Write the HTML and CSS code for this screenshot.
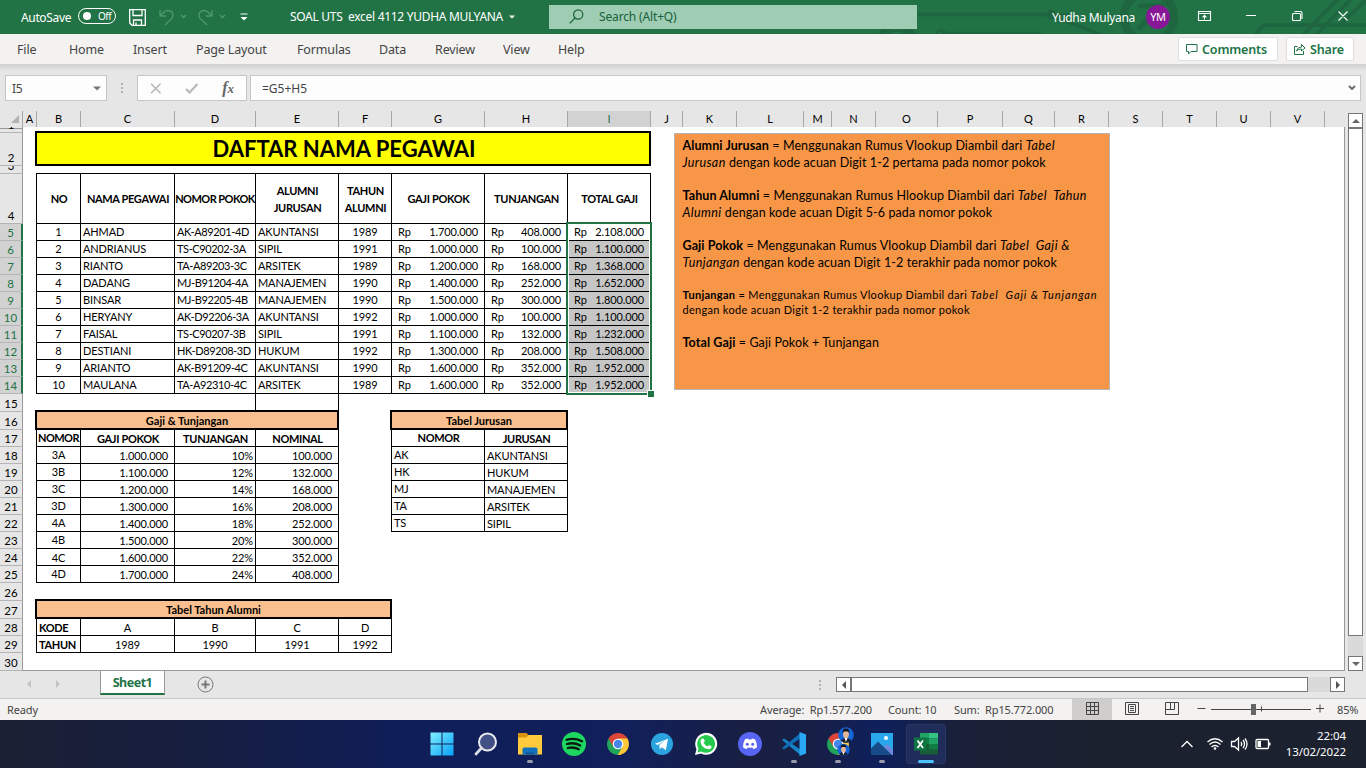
FILE: index.html
```html
<!DOCTYPE html>
<html lang="id">
<head>
<meta charset="utf-8">
<title>SOAL UTS excel 4112 YUDHA MULYANA</title>
<link rel="stylesheet" href="styles.css">
</head>
<body>
<header class="titlebar">
  <svg class="circuit" width="500" height="34" viewBox="866 0 500 34" fill="none" stroke="#1e6540" stroke-width="3.5">
    <circle cx="896" cy="40" r="15" stroke-width="6"/><path d="M888 34l3-3h11l3 3" stroke-width="2"/>
    <path d="M917 14.500H1050M1055 17l52 20M1050 15l22 0M910 30l6 6M941 33.500h100"/><circle cx="1051" cy="14.500" r="3"/><circle cx="941" cy="34" r="4" stroke-width="2.500"/>
    <circle cx="1149" cy="17" r="25" stroke-width="8"/><path d="M1138 6h24v18M1160 7l-22 22" stroke-width="5"/>
    <path d="M1254 36l10-11h102M1302 36l37-38M1315 36l37-38M1340 25l26-25"/>
  </svg>
  <span class="autosave">AutoSave</span>
  <span class="toggle"><i class="knob"></i>Off</span>
  <svg class="save" width="17" height="17" viewBox="0 0 17 17" fill="none" stroke="#fff" stroke-width="1.300"><path d="M.7.7h15.600v15.600H3L.7 14zM4 1v5.500h9V1M4.500 16v-5h8v5M7 16v-2.500"/></svg>
  <svg class="undo" width="80" height="18" viewBox="0 0 80 18" fill="none" stroke="#4f9870" stroke-width="1.300"><path d="M1 1v6h6M1 7l4-4c4-3 9-1 9 3 0 2-1 4-3 5l-5 5M22 6l2.500 2.500L27 6M53 1v6h-6M53 7l-4-4c-4-3-9-1-9 3 0 2 1 4 3 5l5 5M61 6l2.500 2.500L66 6"/></svg>
  <svg class="qat" width="8" height="8" viewBox="0 0 8 8"><path d="M.5 1h7" stroke="#fff"/><path d="M.5 4h7L4 7.500z" fill="#fff"/></svg>
  <span class="docname">SOAL UTS&nbsp; excel 4112 YUDHA MULYANA</span>
  <svg class="doccaret" width="6" height="4"><path d="M0 .5h6L3 3.500z" fill="#fff"/></svg>
  <div class="search"><svg width="15" height="15" viewBox="0 0 15 15" fill="none" stroke="#19603a" stroke-width="1.200"><circle cx="9.200" cy="5.500" r="4.600"/><path d="M6 9L.7 14.300"/></svg><span>Search (Alt+Q)</span></div>
  <span class="user">Yudha Mulyana</span>
  <span class="avatar">YM</span>
  <svg class="winbtns" width="156" height="14" viewBox="1197 9 156 14" fill="none" stroke="#fff" stroke-width="1.100"><path d="M1198.500 11.500h12v9h-12zM1198.500 13.500h12M1204.500 19.500v-4M1202.500 17.300l2-2 2 2M1246 15.500h10M1292.500 14.500q0-1 1-1h6q1 0 1 1v5q0 1-1 1h-6q-1 0-1-1zM1294.500 11.500h6q1.500 0 1.500 1.500v6M1338.500 11.500l9 9M1347.500 11.500l-9 9"/></svg>
</header>
<nav class="ribbon">
  <span class="t-file">File</span><span class="t-home">Home</span><span class="t-insert">Insert</span><span class="t-layout">Page Layout</span><span class="t-formulas">Formulas</span><span class="t-data">Data</span><span class="t-review">Review</span><span class="t-view">View</span><span>Help</span>
  <div class="actions">
    <button class="comments"><svg width="12" height="11" viewBox="0 0 12 11" fill="none" stroke="#217346"><path d="M.5.5h10.500v7H5L2.500 10V7.500h-2z"/></svg>Comments</button>
    <button class="share"><svg width="12" height="12" viewBox="0 0 12 12" fill="none" stroke="#217346"><path d="M3.500 3.500h-3v8h9V8M2.500 8q1-4 5-4V1.500L11 5 7.500 8V6q-3 0-5 2z"/></svg>Share</button>
  </div>
</nav>
<section class="formulabar">
  <div class="namebox"><span>I5</span><svg width="8" height="5"><path d="M0 .5h8L4 4.500z" fill="#777"/></svg></div>
  <div class="grip"><i></i><i></i><i></i></div>
  <div class="fxbox">
    <svg width="12" height="11" viewBox="0 0 12 11" fill="none" stroke="#b8b8b8" stroke-width="1.600"><path d="M1 .7l9.500 9.600M10.500.7L1 10.300"/></svg>
    <svg width="14" height="11" viewBox="0 0 14 11" fill="none" stroke="#b8b8b8" stroke-width="2.200"><path d="M1 6l3.500 3.500L12.500 1"/></svg>
    <span class="fx">f<small>x</small></span>
  </div>
  <div class="formula"><span>=G5+H5</span><svg width="8" height="6" fill="none" stroke="#666" stroke-width="1.800"><path d="M1 1l3 3 3-3"/></svg></div>
</section>
<main class="workspace">
<div class="sheet">
  <div class="colheads">
    <span class="corner"><svg width="8" height="8"><path d="M8 0v8H0z" fill="#b3b3b3"/></svg></span><span>A</span><span>B</span><span>C</span><span>D</span><span>E</span><span>F</span><span>G</span><span>H</span><span class="sel">I</span><span>J</span><span>K</span><span>L</span><span>M</span><span>N</span><span>O</span><span>P</span><span>Q</span><span>R</span><span>S</span><span>T</span><span>U</span><span>V</span><span class="last"></span>
  </div>
  <div class="rowheads">
    <span>1</span><span>2</span><span>3</span><span>4</span><span class="sel">5</span><span class="sel">6</span><span class="sel">7</span><span class="sel">8</span><span class="sel">9</span><span class="sel">10</span><span class="sel">11</span><span class="sel">12</span><span class="sel">13</span><span class="sel">14</span><span>15</span><span>16</span><span>17</span><span>18</span><span>19</span><span>20</span><span>21</span><span>22</span><span>23</span><span>24</span><span>25</span><span>26</span><span>27</span><span>28</span><span>29</span><span>30</span>
  </div>
  <div class="paper"></div>
  <h1 class="banner">DAFTAR NAMA PEGAWAI</h1>
  <div class="table pegawai">
    <b>NO</b><b>NAMA PEGAWAI</b><b class="tight">NOMOR POKOK</b><b>ALUMNI<br>JURUSAN</b><b>TAHUN<br>ALUMNI</b><b>GAJI POKOK</b><b>TUNJANGAN</b><b>TOTAL GAJI</b>
    <span class="c">1</span><span>AHMAD</span><span class="id">AK-A89201-4D</span><span>AKUNTANSI</span><span class="c">1989</span><span class="rp"><i>Rp</i>1.700.000</span><span class="rp"><i>Rp</i>408.000</span><span class="rp"><i>Rp</i>2.108.000</span>
    <span class="c">2</span><span>ANDRIANUS</span><span class="id">TS-C90202-3A</span><span>SIPIL</span><span class="c">1991</span><span class="rp"><i>Rp</i>1.000.000</span><span class="rp"><i>Rp</i>100.000</span><span class="rp g"><i>Rp</i>1.100.000</span>
    <span class="c">3</span><span>RIANTO</span><span class="id">TA-A89203-3C</span><span>ARSITEK</span><span class="c">1989</span><span class="rp"><i>Rp</i>1.200.000</span><span class="rp"><i>Rp</i>168.000</span><span class="rp g"><i>Rp</i>1.368.000</span>
    <span class="c">4</span><span>DADANG</span><span class="id">MJ-B91204-4A</span><span>MANAJEMEN</span><span class="c">1990</span><span class="rp"><i>Rp</i>1.400.000</span><span class="rp"><i>Rp</i>252.000</span><span class="rp g"><i>Rp</i>1.652.000</span>
    <span class="c">5</span><span>BINSAR</span><span class="id">MJ-B92205-4B</span><span>MANAJEMEN</span><span class="c">1990</span><span class="rp"><i>Rp</i>1.500.000</span><span class="rp"><i>Rp</i>300.000</span><span class="rp g"><i>Rp</i>1.800.000</span>
    <span class="c">6</span><span>HERYANY</span><span class="id">AK-D92206-3A</span><span>AKUNTANSI</span><span class="c">1992</span><span class="rp"><i>Rp</i>1.000.000</span><span class="rp"><i>Rp</i>100.000</span><span class="rp g"><i>Rp</i>1.100.000</span>
    <span class="c">7</span><span>FAISAL</span><span class="id">TS-C90207-3B</span><span>SIPIL</span><span class="c">1991</span><span class="rp"><i>Rp</i>1.100.000</span><span class="rp"><i>Rp</i>132.000</span><span class="rp g"><i>Rp</i>1.232.000</span>
    <span class="c">8</span><span>DESTIANI</span><span class="id">HK-D89208-3D</span><span>HUKUM</span><span class="c">1992</span><span class="rp"><i>Rp</i>1.300.000</span><span class="rp"><i>Rp</i>208.000</span><span class="rp g"><i>Rp</i>1.508.000</span>
    <span class="c">9</span><span>ARIANTO</span><span class="id">AK-B91209-4C</span><span>AKUNTANSI</span><span class="c">1990</span><span class="rp"><i>Rp</i>1.600.000</span><span class="rp"><i>Rp</i>352.000</span><span class="rp g"><i>Rp</i>1.952.000</span>
    <span class="c">10</span><span>MAULANA</span><span class="id">TA-A92310-4C</span><span>ARSITEK</span><span class="c">1989</span><span class="rp"><i>Rp</i>1.600.000</span><span class="rp"><i>Rp</i>352.000</span><span class="rp g"><i>Rp</i>1.952.000</span>
  </div>
  <div class="selection"><i class="handle"></i></div>
  <div class="gap15"></div>
  <div class="table low tunjangan">
    <h2>Gaji &amp; Tunjangan</h2>
    <b class="up tight">NOMOR</b><b>GAJI POKOK</b><b>TUNJANGAN</b><b>NOMINAL</b>
    <span class="c up">3A</span><span class="n">1.000.000</span><span class="p">10%</span><span class="n">100.000</span>
    <span class="c up">3B</span><span class="n">1.100.000</span><span class="p">12%</span><span class="n">132.000</span>
    <span class="c up">3C</span><span class="n">1.200.000</span><span class="p">14%</span><span class="n">168.000</span>
    <span class="c up">3D</span><span class="n">1.300.000</span><span class="p">16%</span><span class="n">208.000</span>
    <span class="c up">4A</span><span class="n">1.400.000</span><span class="p">18%</span><span class="n">252.000</span>
    <span class="c up">4B</span><span class="n">1.500.000</span><span class="p">20%</span><span class="n">300.000</span>
    <span class="c">4C</span><span class="n">1.600.000</span><span class="p">22%</span><span class="n">352.000</span>
    <span class="c up">4D</span><span class="n">1.700.000</span><span class="p">24%</span><span class="n">408.000</span>
  </div>
  <div class="table low jurusan">
    <h2>Tabel Jurusan</h2>
    <b class="up">NOMOR</b><b>JURUSAN</b>
    <span class="up">AK</span><span>AKUNTANSI</span>
    <span class="up">HK</span><span>HUKUM</span>
    <span class="up">MJ</span><span>MANAJEMEN</span>
    <span class="up">TA</span><span>ARSITEK</span>
    <span class="up">TS</span><span>SIPIL</span>
  </div>
  <div class="table low alumni">
    <h2>Tabel Tahun Alumni</h2>
    <b class="l">KODE</b><span class="c">A</span><span class="c">B</span><span class="c">C</span><span class="c">D</span>
    <b class="l">TAHUN</b><span class="c">1989</span><span class="c">1990</span><span class="c">1991</span><span class="c">1992</span>
  </div>
  <aside class="note">
    <p><b>Alumni Jurusan</b> = Menggunakan Rumus Vlookup Diambil dari <em>Tabel<br>Jurusan</em> dengan kode acuan Digit 1-2 pertama pada nomor pokok</p>
    <p><b>Tahun Alumni</b> = Menggunakan Rumus Hlookup Diambil dari <em>Tabel&nbsp; Tahun<br>Alumni</em> dengan kode acuan Digit 5-6 pada nomor pokok</p>
    <p><b>Gaji Pokok</b> = Menggunakan Rumus Vlookup Diambil dari <em>Tabel&nbsp; Gaji &amp;<br>Tunjangan</em> dengan kode acuan Digit 1-2 terakhir pada nomor pokok</p>
    <p class="small"><b>Tunjangan</b> = Menggunakan Rumus Vlookup Diambil dari <em>Tabel&nbsp; Gaji &amp; Tunjangan</em><br>dengan kode acuan Digit 1-2 terakhir pada nomor pokok</p>
    <p><b>Total Gaji</b> = Gaji Pokok + Tunjangan</p>
  </aside>
</div>
<div class="vscroll">
  <span class="sbtn"><svg width="8" height="4"><path d="M0 4h8L4 0z" fill="#666"/></svg></span>
  <span class="vthumb"></span>
  <span class="sbtn down"><svg width="8" height="4"><path d="M0 0h8L4 4z" fill="#666"/></svg></span>
</div>
</main>
<section class="tabs">
  <svg class="tabnav" width="33" height="8"><path d="M4 0v8L0 4zM29 0v8l4-4z" fill="#c3c3c3"/></svg>
  <span class="tab">Sheet1</span>
  <svg class="addtab" width="17" height="17" viewBox="0 0 17 17" fill="none" stroke="#767676"><circle cx="8.500" cy="8.500" r="7.500"/><path d="M8.500 4.500v8M4.500 8.500h8" stroke-width="2"/></svg>
  <div class="grip"><i></i><i></i><i></i></div>
  <div class="hscroll">
    <span class="sbtn"><svg width="4" height="8"><path d="M4 0v8L0 4z" fill="#555"/></svg></span><span class="hthumb"></span><span class="sbtn right"><svg width="4" height="8"><path d="M0 0v8l4-4z" fill="#555"/></svg></span>
  </div>
</section>
<footer class="status">
  <span class="ready">Ready</span>
  <span class="avg">Average:&nbsp; Rp1.577.200</span><span class="cnt">Count: 10</span><span class="sum">Sum:&nbsp; Rp15.772.000</span>
  <span class="view on"><svg width="13" height="13" viewBox="0 0 13 13" fill="none" stroke="#444"><path d="M.5.5h12v12H.5zM4.500.5v12M8.500.5v12M.5 4.500h12M.5 8.500h12"/></svg></span>
  <span class="view"><svg width="14" height="13" viewBox="0 0 14 13" fill="none" stroke="#444"><path d="M.5.5h13v12H.5zM3.500 2.500h7v8h-7zM5 4.500h4M5 6.500h4M5 8.500h4"/></svg></span>
  <span class="view"><svg width="14" height="13" viewBox="0 0 14 13" fill="none" stroke="#444"><path d="M.5.5h13v12H.5zM5.500.5v7M9.500.5v7M.5 7.500h9"/></svg></span>
  <svg class="zoom" width="128" height="11" viewBox="1197 704 128 11" stroke="#444" fill="none"><path d="M1197.500 708.500h8M1211 709.500h100M1261.500 706.500v5M1316 708.500h8M1320 704.500v8"/><path d="M1251 704h5v11h-5z" fill="#666" stroke="none"/></svg>
  <span class="pct">85%</span>
</footer>
<footer class="taskbar">
  <div class="apps">
    <span><svg viewBox="0 0 24 24"><defs><linearGradient id="w" x2="1" y2="1"><stop stop-color="#80f0ff"/><stop offset="1" stop-color="#08a0f8"/></linearGradient></defs><path fill="url(#w)" d="M.5.5h11v11H.500zM12.500.5h11v11h-11zM.5 12.500h11v11H.500zM12.500 12.500h11v11h-11z"/></svg></span>
    <span><svg viewBox="0 0 24 24" fill="none"><circle cx="13.500" cy="10" r="8.500" fill="#435085" stroke="#e9eaf0" stroke-width="2"/><path d="M7.500 16L2 22" stroke="#d9dce5" stroke-width="2.800" stroke-linecap="round"/></svg></span>
    <span class="run"><svg viewBox="0 0 24 24"><path d="M0 1h8.500l2 2H20v5H0z" fill="#d8930f"/><path d="M0 5.500h8l3-2.500h13v19.500H0z" fill="#ffcb3d"/><path d="M4.500 22.500V17q0-1.500 1.500-1.500h12q1.500 0 1.500 1.500v5.500z" fill="#1271bd"/><path d="M8 22.500v-2h8v2z" fill="#0b559b"/></svg></span>
    <span><svg viewBox="0 0 24 24" fill="none"><circle cx="12" cy="12" r="12" fill="#1ed760"/><path d="M4.500 7.800q8-2.300 15.500 1.500M5 12q7-2 13.200 1.500M5.800 16q6-1.500 11 1.300" stroke="#0a1a10" stroke-width="2.300" stroke-linecap="round"/></svg></span>
    <span><svg viewBox="0 0 24 24"><g id="chrome"><path d="M12 12L2.500 6.500A11 11 0 0 1 21.500 6.500z" fill="#dc4639"/><path d="M12 12V23A11 11 0 0 1 2.500 6.500z" fill="#22a35a"/><path d="M12 12l9.500-5.500A11 11 0 0 1 12 23z" fill="#fdc839"/><path d="M12 6.500h9.500L16.500 15z" fill="#fdc839"/><path d="M7.500 15L2.500 6.500 12 6.500z" fill="#dc4639"/><path d="M7.300 14.700l9.400 0L12 23z" fill="#22a35a"/><path d="M16.700 14.700L12 23l3 -.3 6-9z" fill="#fdc839"/><circle cx="12" cy="12" r="5.300" fill="#fff"/><circle cx="12" cy="12" r="4.200" fill="#4787ec"/></g></svg></span>
    <span><svg viewBox="0 0 24 24"><circle cx="12" cy="12" r="11" fill="#2ba3df"/><path d="M5 11.800L18 6.800l-2.200 11.500-4-3-2 2-.6-4.300 5.800-4.500-7.500 4.500z" fill="#fff"/></svg></span>
    <span><svg viewBox="0 0 24 24"><path d="M1 23l1.500-6A11 11 0 1 1 7 21.500z" fill="#fff"/><path d="M3.500 20.500l1-4A8.900 8.900 0 1 1 7.500 19.500z" fill="#25c94b"/><path d="M8 6.500l1.800.2 1 2.500-1.200 1.500q1.300 2.700 4 3.700l1.400-1.500 2.600 1.300q0 3-3 3-7-.8-8.200-7.700Q6.500 7.500 8 6.500z" fill="#fff"/></svg></span>
    <span><svg viewBox="0 0 24 24"><circle cx="12" cy="12" r="12" fill="#5865f2"/><path d="M7 7.300l3-.8.7 1h2.600l.7-1 3 .8q2.200 3.700 2 8-1.700 1.500-3.800 1.700l-.8-1.500q-2.400.6-4.800 0L8.800 17Q6.700 16.800 5 15.300q-.2-4.300 2-8z" fill="#fff"/><circle cx="9.300" cy="12.200" r="1.500" fill="#5865f2"/><circle cx="14.700" cy="12.200" r="1.500" fill="#5865f2"/></svg></span>
    <span class="run"><svg viewBox="0 0 24 24"><path d="M0 8l2-1.500L19 18v5.500z" fill="#1583c7"/><path d="M0 16l2 1.500L19 6V.500z" fill="#0e6eb5"/><path d="M17.500 0L24 2.500v19L17.500 24z" fill="#29a9f3"/></svg></span>
    <span class="run"><svg viewBox="0 0 24 24" overflow="visible"><use href="#chrome"/><circle cx="20" cy="3" r="7.800" fill="#1467d8"/><path d="M14.500 8.500Q17 6 20 6t5.500 2.500q-5.500 4.500-11 0z" fill="#182130"/><path d="M18.500 6h3L20 10z" fill="#fff"/><ellipse cx="20" cy="2.500" rx="2.900" ry="3.800" fill="#e6b696"/><path d="M16.500 1.500q-.5-5 3.500-5t3.500 5l-1-2h-5z" fill="#1a1718"/><circle cx="17.500" cy="18" r="6.200" fill="#1467d8"/><path d="M13 22q2-2 4.500-2t4.500 2q-4.500 4-9 0z" fill="#182130"/><path d="M16.300 20h2.400l-1.200 3z" fill="#fff"/><ellipse cx="17.500" cy="17.500" rx="2.400" ry="3" fill="#e6b696"/><path d="M14.700 16.500q-.4-4 2.800-4t2.800 4l-.8-1.500h-4z" fill="#1a1718"/></svg></span>
    <span class="run"><svg viewBox="0 0 24 24"><path d="M1 1h22v22H1z" fill="#28a8ea"/><path d="M10 18l7-6 6 6v5H10z" fill="#6e86dc"/><path d="M1 16.500l7-7 14 13.500H1z" fill="#174c88"/><circle cx="16" cy="6" r="2" fill="#fff"/></svg></span>
    <span class="run active"><svg viewBox="0 0 24 24"><path d="M6 1h9v5.500H6z" fill="#21a366"/><path d="M15 1h9v5.500h-9z" fill="#33c481"/><path d="M6 6.500h9V12H6z" fill="#107c41"/><path d="M15 6.500h9V12h-9z" fill="#21a366"/><path d="M6 12h18v10.500H6z" fill="#185c37"/><path d="M15 12h9v5.500h-9z" fill="#107c41"/><path d="M0 5.500h12.500v13H0z" fill="#0e7440"/><path d="M3.500 8.500l5.500 7.500M9 8.500L3.500 16" stroke="#fff" stroke-width="1.800"/></svg></span>
  </div>
  <svg class="tray" width="92" height="16" viewBox="1180 736 92 16" fill="none" stroke="#fff" stroke-width="1.300"><path d="M1181.500 747l5.500-5.500 5.500 5.500"/><path d="M1207.500 742q7.500-6.500 15 0M1209.500 744.500q5.500-5 11 0M1211.500 747q3.500-3 7 0"/><circle cx="1215" cy="748.500" r="1.300" fill="#fff" stroke="none"/><path d="M1231.500 741.500h3l4-3.500v12l-4-3.500h-3zM1241 742q1.500 2 0 4M1243 740q3 4 0 8M1245 738.500q4 5.500 0 11"/><path d="M1257.500 739.500h10q1 0 1 1v7q0 1-1 1h-10q-1.500 0-1.500-1v-7q0-1 1.500-1z"/><path d="M1257.500 741h3.500v6h-3.500zM1269 742.500h1.500v3h-1.500z" fill="#fff" stroke="none"/></svg>
  <div class="clock"><span>22:04</span><span>13/02/2022</span></div>
</footer>
</body>
</html>
```
FILE: styles.css
```css
* { box-sizing: border-box; }
body { margin: 0; width: 1366px; height: 768px; overflow: hidden; background: #e6e6e6; font: 12px "Noto Sans", sans-serif; color: #444; display: flex; flex-direction: column; }
svg { display: block; flex: none; }
i { font-style: normal; }
span, b { white-space: nowrap; }

.titlebar { position: relative; flex: none; height: 34px; background: #217346; color: #fff; display: flex; align-items: center; }
.circuit { position: absolute; right: 0; top: 0; }
.titlebar > :not(.circuit) { position: relative; flex: none; }
.autosave { width: 57px; margin-left: 21px; letter-spacing: -.35px; }
.toggle { width: 38px; height: 16px; margin-top: -2px; border: 1px solid #fff; border-radius: 8px; display: flex; align-items: center; gap: 7px; padding-left: 4px; font-size: 10px; letter-spacing: -.5px; }
.knob { width: 8px; height: 8px; border-radius: 50%; background: #fff; }
.save { margin-left: 13px; margin-top: 1px; }
.undo { margin-left: 13px; margin-top: 2px; }
.qat { margin-left: 1px; }
.docname { margin-left: 42px; width: 220px; margin-top: -2px; letter-spacing: -.3px; }
.doccaret { margin-top: -1px; margin-left: -1px; }
.search { width: 368px; height: 24px; margin-left: 34px; margin-top: -1px; background: #9fcdb3; color: #17603a; display: flex; align-items: center; padding-left: 20px; gap: 15px; letter-spacing: -.15px; }
.user { width: 94px; margin-left: 135px; letter-spacing: -.3px; }
.avatar { width: 24px; height: 24px; border-radius: 50%; background: #881798; font-size: 11px; line-height: 24px; text-align: center; letter-spacing: -.3px; }
.winbtns { margin-left: 27px; margin-top: -2px; }

.ribbon { flex: none; height: 30px; background: #f3f2f1; display: flex; align-items: center; padding: 0 12px 0 17px; font-size: 12.500px; letter-spacing: -.15px; }
.t-file { width: 52px; } .t-home { width: 64px; } .t-insert { width: 63px; } .t-layout { width: 101px; } .t-formulas { width: 82px; } .t-data { width: 56px; } .t-review { width: 68px; } .t-view { width: 55px; }
.actions { margin-left: auto; display: flex; gap: 8px; }
.actions button { height: 24px; padding: 0 0 0 7px; display: flex; align-items: center; background: #fff; border: 1px solid #e1dfdd; border-radius: 2px; color: #217346; font: 600 12.500px "Noto Sans", sans-serif; letter-spacing: -.15px; gap: 4px; }
.actions .comments { width: 100px; }
.actions .share { width: 68px; }

.formulabar { flex: none; height: 47px; padding: 11px 5px 10px; display: flex; background: linear-gradient(#d0d0d0, #e6e6e6 7px); }
.namebox, .fxbox, .formula { height: 26px; background: #fdfdfd; border: 1px solid #c6c6c6; display: flex; align-items: center; }
.namebox { width: 102px; padding: 0 5px 0 6px; justify-content: space-between; letter-spacing: -.3px; }
.grip { width: 2px; display: flex; flex-direction: column; justify-content: center; gap: 2px; }
.grip i { width: 2px; height: 2px; background: #b2b2b2; }
.formulabar .grip { margin: 0 14px; }
.fxbox { width: 110px; padding: 0 12px; justify-content: space-between; }
.fx { font: italic bold 16px "Liberation Serif", serif; color: #666; line-height: 20px; }
.fx small { font-size: 13px; }
.formula { flex: 1; margin-left: 3px; padding: 0 4px 0 11px; justify-content: space-between; letter-spacing: 0; }

.workspace { flex: none; height: 560px; display: flex; }
.sheet { position: relative; width: 1345px; display: grid; font: 11px Lato, sans-serif; color: #000;
  grid-template-columns: 23px 14px 44px 94px 81px 83px 53px 93px 83px 83px 32px 54px 67px 28px 44px 62px 65px 52px 54px 54px 54px 54px 54px 20px;
  grid-template-rows: 16px 6px 33px 8px 50px repeat(10, 17px) 18px 18px repeat(9, 17px) 18px 18px 17px 17px 18px; }
.colheads { grid-row: 1; grid-column: 1 / -1; display: grid; grid-template-columns: subgrid; }
.colheads span { border-right: 1px solid #a8a8a8; border-bottom: 1px solid #999; text-align: center; line-height: 16px; }
.colheads .sel { background: #d2d2d2; color: #217346; border-bottom: 2px solid #217346; }
.colheads .last { border-right: 0; }
.colheads .corner { padding: 4px 0 0 11px; }
.rowheads { grid-column: 1; grid-row: 2 / -1; display: grid; grid-template-rows: subgrid; }
.rowheads span { display: flex; align-items: flex-end; justify-content: center; border-right: 1px solid #999; border-bottom: 1px solid #b5b5b5; line-height: 15px; overflow: hidden; min-height: 0; font-size: 11.500px; }
.rowheads .sel { background: #d2d2d2; color: #217346; border-right: 2px solid #217346; }
.paper { grid-column: 2 / -1; grid-row: 2 / -1; background: #fff; border: solid #999; border-width: 0 1px 1px 0; }
.banner { grid-column: 3 / 11; grid-row: 3; margin: -2px 0 0 -2px; border: 2px solid #000; background: #ff0; font-size: 22px; line-height: 31px; text-align: center; padding-left: 2px; }

.table { display: grid; grid-template: subgrid / subgrid; }
.pegawai { grid-column: 3 / 11; grid-row: 5 / 16; }
.tunjangan { grid-column: 3 / 7; grid-row: 17 / 27; }
.jurusan { grid-column: 8 / 10; grid-row: 17 / 24; }
.alumni { grid-column: 3 / 8; grid-row: 28 / 31; }
.table > * { margin: -1px 0 0 -1px; border: 1px solid #000; display: flex; align-items: center; padding: 0 2px; line-height: 16px; min-width: 0; letter-spacing: -.12px; }
.table > b { justify-content: center; text-align: center; padding: 0 0 0 1px; letter-spacing: -.35px; }
.pegawai > b { line-height: 17px; }
.low > * { padding-top: 2px; }
.low > b { padding-top: 2px; }
.table > .tight { letter-spacing: -.55px; padding-left: 0; }
.table > .id { letter-spacing: -.4px; }
.table > b.l { justify-content: flex-start; padding-left: 2px; }
.table > .c { justify-content: center; }
.table > .n { justify-content: flex-end; padding-right: 6px; }
.table > .p { justify-content: flex-end; padding-right: 2px; }
.table > .rp { justify-content: space-between; padding: 0 6px; }
.table > .g { background: #c6c6c6; }
.table > h2 { grid-column: 1 / -1; margin: -2px 0 0 -2px; border: 2px solid #000; background: #fabf8f; font-size: 11px; justify-content: center; z-index: 1; padding-top: 1px; letter-spacing: 0; }
.table > .up { padding-top: 0; }
.selection { grid-column: 10; grid-row: 6 / 16; margin: -2px -1px -1px -2px; border: 2px solid #217346; box-shadow: inset 0 0 0 1px #fff; position: relative; z-index: 2; }
.handle { position: absolute; right: -4px; bottom: -4px; width: 7px; height: 7px; background: #217346; border: solid #fff; border-width: 1px 0 0 1px; }
.gap15 { grid-column: 6; grid-row: 16; margin-left: -1px; border: solid #000; border-width: 0 1px; }
.note { position: absolute; left: 674px; top: 22px; width: 436px; height: 257px; background: #f79646; border: 1px solid #b5b5b5; padding: 4px 8px 4px 7.500px; font-size: 12.500px; line-height: 16.660px; letter-spacing: .1px; }
.note em { letter-spacing: .4px; }
.note p { margin: 0 0 16.660px; white-space: nowrap; }
.note .small { font-size: 11px; line-height: 15px; margin: -1px 0 18px; letter-spacing: .3px; }
.note .small em { letter-spacing: .9px; }

.vscroll { width: 15px; margin: 2px 0 0 3px; background: #dadada; display: flex; flex-direction: column; }
.sbtn { width: 15px; height: 15px; background: #fff; border: 1px solid #777; display: flex; align-items: center; justify-content: center; flex: none; }
.vthumb { height: 508px; background: #fff; border: 1px solid #777; }
.down { margin-top: auto; }

.tabs { flex: none; height: 28px; display: flex; border-bottom: 1px solid #c6c6c6; }
.tabnav { margin: 9px 0 0 27px; }
.tab { width: 65px; height: 25px; margin: -1px 0 0 40px; background: #fff; border: solid #999; border-width: 0 1px; border-bottom: 2px solid #217346; color: #217346; font-weight: 700; font-size: 12.500px; line-height: 26px; text-align: center; letter-spacing: -.5px; }
.addtab { margin: 5px 0 0 32px; }
.tabs .grip { margin: 0 15px 0 605px; }
.hscroll { width: 509px; height: 15px; margin-top: 6px; background: #dadada; display: flex; }
.hthumb { width: 457px; background: #fff; border: 1px solid #777; }
.right { margin-left: auto; }

.status { flex: none; height: 21px; background: #f3f2f1; display: flex; align-items: center; font-size: 11px; letter-spacing: -.12px; }
.ready { width: 753px; margin-left: 7px; }
.avg { width: 128px; } .cnt { width: 66px; } .sum { width: 118px; }
.view { width: 40px; height: 21px; display: flex; align-items: center; justify-content: center; padding-bottom: 2px; }
.on { background: #cfcecd; }
.zoom { margin-left: 5px; }
.pct { margin-left: 12px; }

.taskbar { flex: none; height: 48px; display: flex; align-items: center; color: #fff; background: linear-gradient(90deg, #1b2033, #161e40 200px, #0f1e58 400px, #11205c 620px, #191f42 750px, #171f48 820px, #0e205c 880px, #1a2038 960px, #1b212e 1100px, #1b212e); }
.apps { display: flex; gap: 4px; margin-left: 422px; }
.apps span { width: 40px; height: 40px; padding: 8px; position: relative; border-radius: 4px; }
.apps svg { width: 24px; height: 24px; }
.run::after { content: ""; position: absolute; left: 17px; bottom: 1px; width: 6px; height: 3px; border-radius: 2px; background: #989cab; }
.active { background: #202c5a; box-shadow: inset 0 0 0 1px #2b3763; }
.active::after { left: 12px; width: 16px; background: #4cc2ff; }
.tray { margin-left: 234px; }
.clock { margin-left: auto; margin-right: 20px; display: flex; flex-direction: column; align-items: flex-end; font-size: 11.500px; line-height: 16px; letter-spacing: -.1px; }
```
